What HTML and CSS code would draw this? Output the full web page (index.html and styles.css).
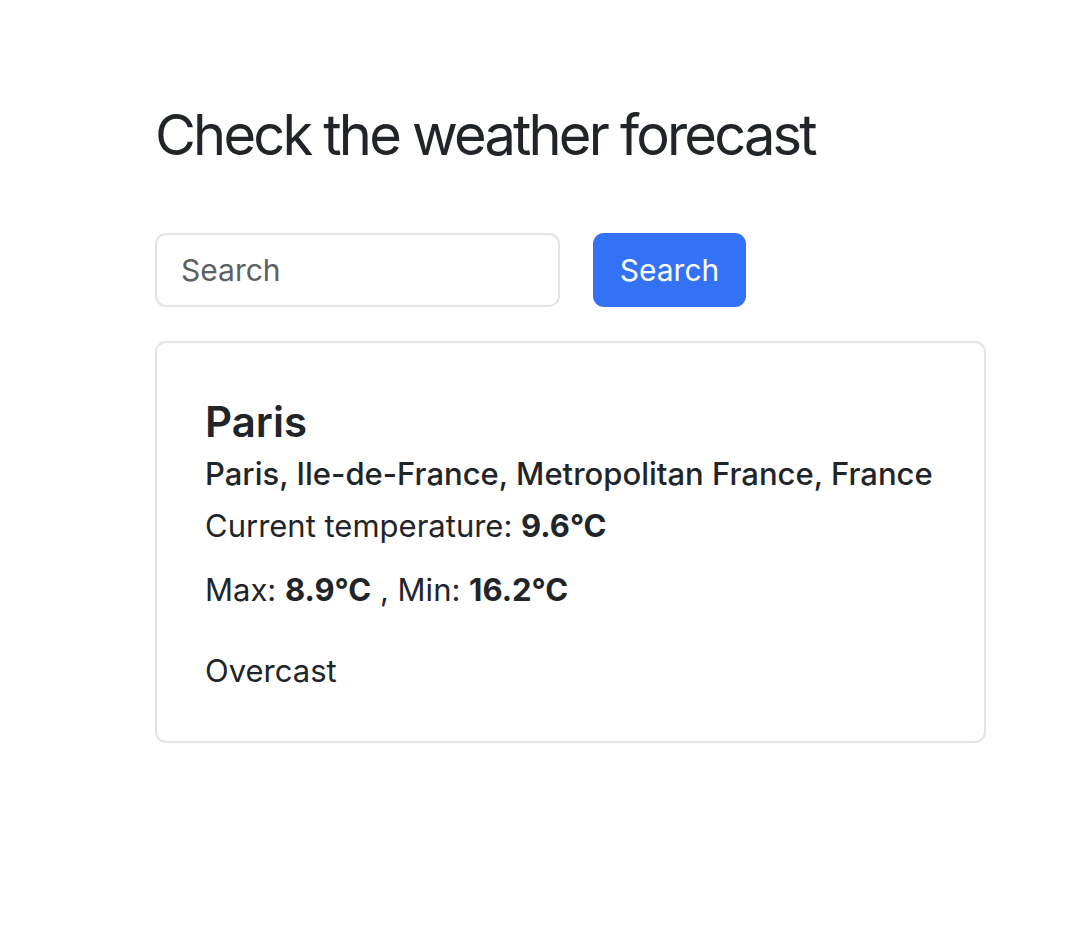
FILE: index.html
```html
<!DOCTYPE html>
<html lang="en">
<head>
<meta charset="utf-8">
<title>Weather</title>
<link rel="stylesheet" href="styles.css">
</head>
<body>
<main class="container">
  <h2 class="title">Check the weather forecast</h2>
  <form class="search-row">
    <input class="search-input" type="text" placeholder="Search">
    <button class="search-btn" type="button">Search</button>
  </form>
  <section class="card">
    <h4 class="city">Paris</h4>
    <h6 class="region">Paris, Ile-de-France, Metropolitan France, France</h6>
    <p class="line temp">Current temperature: <strong>9.6°C</strong></p>
    <p class="line minmax">Max: <strong>8.9°C</strong> , Min: <strong>16.2°C</strong></p>
    <p class="line desc">Overcast</p>
  </section>
</main>
</body>
</html>
```

FILE: styles.css
```css
* { box-sizing: border-box; }
html, body { margin: 0; padding: 0; background: #fff; }
body {
  font-family: Inter, "Liberation Sans", Arial, sans-serif;
  color: #212529;
  font-size: 31px;
  line-height: 1.5;
}
.container {
  padding: 102px 0 0 155px;
  width: 986px;
}
.title {
  margin: 0;
  font-size: 56px;
  font-weight: 400;
  line-height: 1.2;
  letter-spacing: -2.8px;
}
.search-row {
  display: flex;
  gap: 33px;
  margin-top: 64px;
}
.search-input {
  width: 405px;
  height: 74px;
  border: 2px solid #e2e4e7;
  border-radius: 11px;
  padding: 0 24px;
  font-family: inherit;
  font-size: 30px;
  color: #212529;
  outline: none;
}
.search-input::placeholder { color: #5d6063; }
.search-btn {
  width: 153px;
  height: 74px;
  border: none;
  border-radius: 11px;
  background: #3371f5;
  color: #fff;
  font-family: inherit;
  font-size: 30px;
  padding: 0;
}
.card {
  margin-top: 34px;
  border: 2px solid #e2e4e7;
  border-radius: 11px;
  padding: 54px 48px 47px;
}
.city {
  margin: 0;
  font-size: 42px;
  font-weight: 600;
  line-height: 1.2;
}
.region {
  margin: 7px 0 0;
  font-size: 31px;
  font-weight: 500;
  line-height: 1.2;
}
.line { margin: 0; }
.temp { margin-top: 11px; }
.minmax { margin-top: 18px; }
.desc { margin-top: 34px; }
strong { font-weight: 700; }
```
